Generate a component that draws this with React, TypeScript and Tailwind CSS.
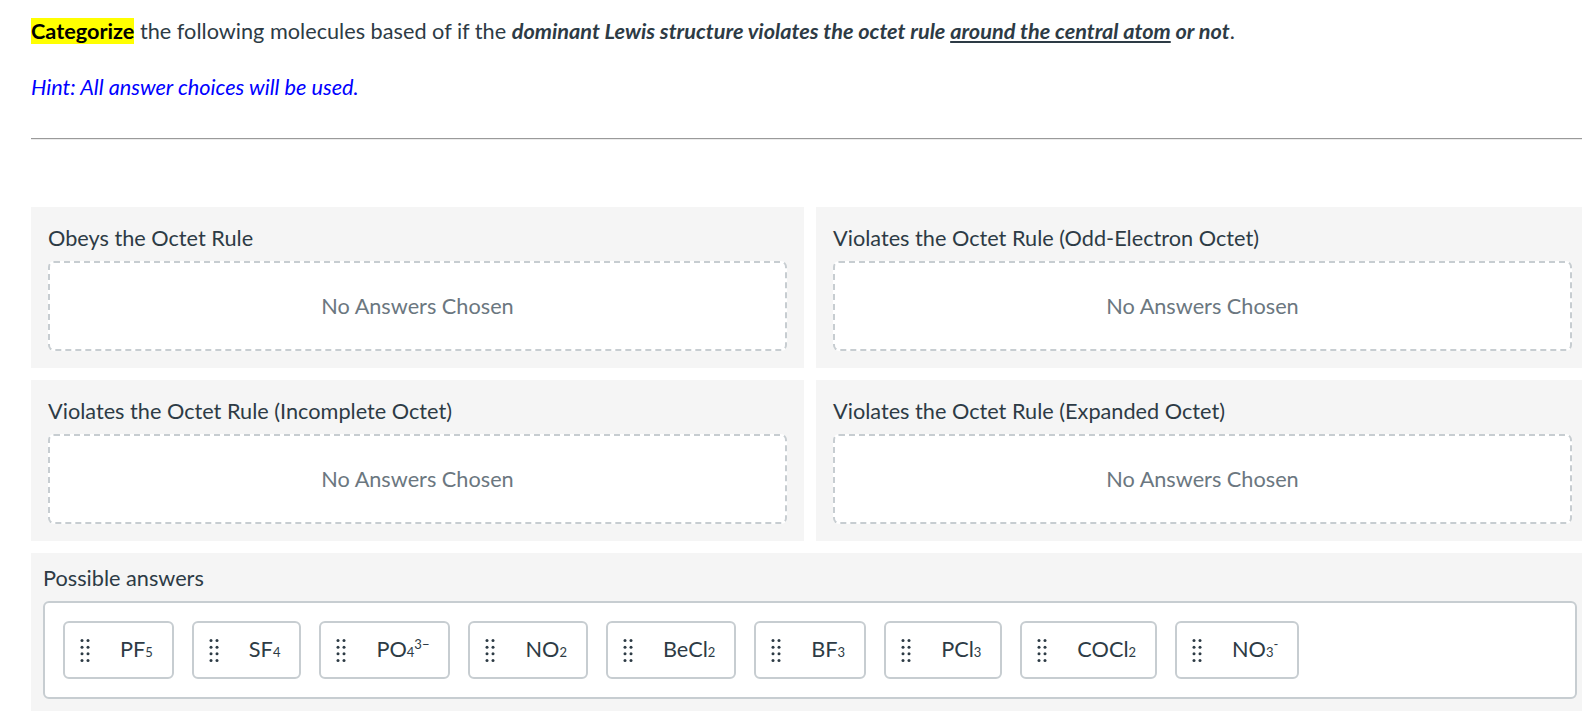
import React from 'react';

type Part = { t: string; sub?: boolean; sup?: boolean };

const answers: Part[][] = [
  [{ t: 'PF' }, { t: '5', sub: true }],
  [{ t: 'SF' }, { t: '4', sub: true }],
  [{ t: 'PO' }, { t: '4', sub: true }, { t: '3−', sup: true }],
  [{ t: 'NO' }, { t: '2', sub: true }],
  [{ t: 'BeCl' }, { t: '2', sub: true }],
  [{ t: 'BF' }, { t: '3', sub: true }],
  [{ t: 'PCl' }, { t: '3', sub: true }],
  [{ t: 'COCl' }, { t: '2', sub: true }],
  [{ t: 'NO' }, { t: '3', sub: true }, { t: '-', sup: true }],
];

const categories = [
  'Obeys the Octet Rule',
  'Violates the Octet Rule (Odd-Electron Octet)',
  'Violates the Octet Rule (Incomplete Octet)',
  'Violates the Octet Rule (Expanded Octet)',
];

function Grip() {
  return (
    <svg width="10" height="23" viewBox="0 0 10 23" className="shrink-0">
      {[1.6, 8.2, 14.8, 21.4].map((y) => (
        <g key={y} fill="#2d3b45">
          <circle cx="2" cy={y} r="1.5" />
          <circle cx="8" cy={y} r="1.5" />
        </g>
      ))}
    </svg>
  );
}

function Chip({ parts }: { parts: Part[] }) {
  return (
    <div className="h-[58px] flex items-center bg-white border-2 border-[#c7cdd1] rounded-[6px] pl-[15px] pr-[19px]">
      <Grip />
      <span className="ml-[30px] text-[21.7px] leading-none whitespace-nowrap">
        {parts.map((p, i) =>
          p.sub ? (
            <span key={i} className="text-[13px]">{p.t}</span>
          ) : p.sup ? (
            <span key={i} className="text-[13px] relative -top-[8px]">{p.t}</span>
          ) : (
            <span key={i}>{p.t}</span>
          )
        )}
      </span>
    </div>
  );
}

function CategoryPanel({ title }: { title: string }) {
  return (
    <div className="bg-[#f5f5f5] pt-[17px] px-[17px] pb-[17px]">
      <div className="text-[21.7px] leading-[28px]">{title}</div>
      <div className="mt-[9px] h-[90px] bg-white border-2 border-dashed border-[#c7cdd1] rounded-[6px] flex items-center justify-center text-[21.7px] text-[#6b7780]">
        No Answers Chosen
      </div>
    </div>
  );
}

export default function App() {
  return (
    <div className="min-h-screen w-full overflow-hidden bg-white text-[#2d3b45] font-['Lato','Noto_Sans',sans-serif]">
      <div className="ml-[31px] w-[1558px] pt-[16px]">
        {/* Question */}
        <p className="text-[21.7px] leading-[30px] whitespace-nowrap">
          <strong className="bg-[#ffff00] text-black font-bold">Categorize</strong> the following molecules based of
          if the{' '}
          <strong className="italic font-bold">
            dominant Lewis structure violates the octet rule <span className="underline">around the central atom</span>{' '}
            or not
          </strong>
          .
        </p>
        <p className="mt-[26px] text-[21.7px] leading-[30px] italic text-[#0000ff]">Hint: All answer choices will be used.</p>

        <div className="mt-[36px] border-t border-t-[#9a9a9a] border-b border-b-[#ececec]" />

        {/* Categories */}
        <div className="mt-[67px] grid grid-cols-2 gap-[12px]">
          {categories.map((c) => (
            <CategoryPanel key={c} title={c} />
          ))}
        </div>

        {/* Possible answers */}
        <div className="mt-[12px] bg-[#f5f5f5] pt-[11px] px-[12px] pb-[12px]">
          <div className="text-[21.7px] leading-[28px]">Possible answers</div>
          <div className="mt-[9px] bg-white border-2 border-[#c7cdd1] rounded-[6px] p-[18px] flex gap-[18px]">
            {answers.map((a, i) => (
              <Chip key={i} parts={a} />
            ))}
          </div>
        </div>
      </div>
    </div>
  );
}
